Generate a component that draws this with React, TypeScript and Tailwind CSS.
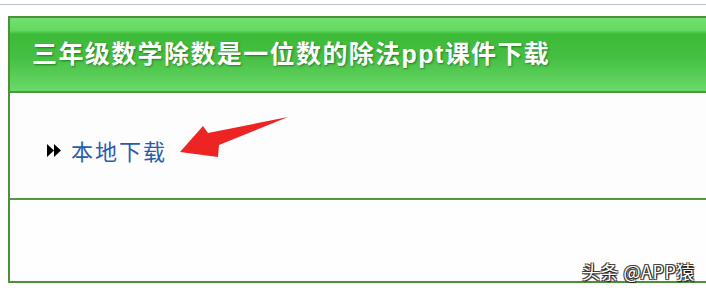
export default function App() {
  return (
    <div className="relative h-[296px] w-[706px] overflow-hidden bg-white font-['Liberation_Sans','Noto_Sans_CJK_SC',sans-serif]">
      {/* page rule */}
      <div className="mt-[4px] h-px bg-[#b9c1cf]" />

      {/* download panel */}
      <div className="ml-[8px] mt-[11px] w-[720px] border-2 border-r-0 border-[#4f8f3c]">
        <div className="flex h-[75px] items-center border-b-2 border-[#4a9a3c] bg-[linear-gradient(to_bottom,#72e06e_0%,#63d95f_17%,#3dba38_22%,#46c043_55%,#6ad96a_100%)] pl-[22px]">
          <h1 className="text-[25px] font-bold tracking-[1.4px] text-white [text-shadow:1px_1px_2px_rgba(0,60,0,0.5)]">
            三年级数学除数是一位数的除法ppt课件下载
          </h1>
        </div>

        <div className="relative h-[107px] border-b-2 border-[#5a9640] bg-[#fdfdfe]">
          <div className="flex items-center pl-[37px] pt-[41px]">
            <svg width="14" height="13" viewBox="0 0 14 13" className="mr-[10px]">
              <path d="M0 0 L7 6.5 L0 13 Z M7 0 L14 6.5 L7 13 Z" fill="#000" />
            </svg>
            <a className="text-[22px] tracking-[2px] text-[#2a5cae] font-['Noto_Sans_CJK_SC',sans-serif]">本地下载</a>
          </div>
          {/* red annotation arrow */}
          <svg className="absolute left-0 top-0" width="300" height="107" viewBox="0 0 300 107">
            <polygon
              points="170,59 193,33 198,40 278,24 209,52 208,64"
              fill="#ee2424"
            />
          </svg>
        </div>

        <div className="h-[81px] bg-[#fefeff]" />
      </div>

      <div className="absolute left-[582px] top-[258px] text-[18px] tracking-[0.5px] text-white [text-shadow:1px_1px_1px_#111,-1px_-1px_0_#444,1px_-1px_0_#444,-1px_1px_0_#444] font-['Noto_Sans_CJK_SC',sans-serif]">
        头条 @APP猿
      </div>
    </div>
  );
}
